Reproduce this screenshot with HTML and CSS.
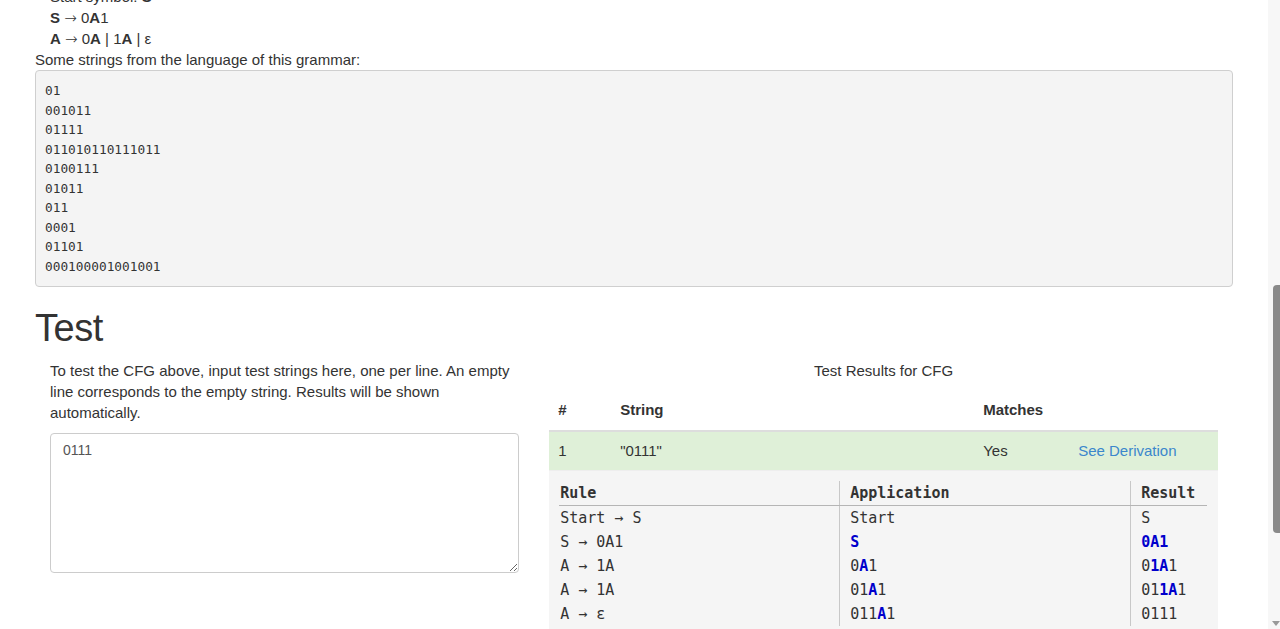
FILE: index.html
```html
<!DOCTYPE html>
<html lang="en">
<head>
<meta charset="utf-8">
<title>CFG Test</title>
<link rel="stylesheet" href="styles.css">
</head>
<body>
<div class="page">
  <main class="content">
    <div class="grammar">
      <div class="gline">Start symbol: <b>S</b></div>
      <div class="gline"><b>S</b> <span class="arr">→</span> 0<b>A</b>1</div>
      <div class="gline"><b>A</b> <span class="arr">→</span> 0<b>A</b> | 1<b>A</b> | ε</div>
    </div>
    <p class="lead-line">Some strings from the language of this grammar:</p>
<pre class="samples">01
001011
01111
011010110111011
0100111
01011
011
0001
01101
000100001001001</pre>
    <h1 class="title">Test</h1>
    <div class="row">
      <div class="col-left">
        <p class="help">To test the CFG above, input test strings here, one per line. An empty line corresponds to the empty string. Results will be shown automatically.</p>
        <textarea class="input">0111</textarea>
      </div>
      <div class="col-right">
        <div class="caption">Test Results for CFG</div>
        <table class="results">
          <thead>
            <tr><th class="c-num">#</th><th class="c-str">String</th><th class="c-match">Matches</th><th class="c-der"></th></tr>
          </thead>
          <tbody>
            <tr class="ok"><td>1</td><td>"0111"</td><td>Yes</td><td><a href="#" class="link">See Derivation</a></td></tr>
            <tr class="deriv-row">
              <td colspan="4" class="deriv-cell">
                <table class="deriv">
                  <thead>
                    <tr><th class="d-rule">Rule</th><th class="d-app">Application</th><th class="d-res">Result</th></tr>
                  </thead>
                  <tbody>
                    <tr><td>Start → S</td><td>Start</td><td>S</td></tr>
                    <tr><td>S → 0A1</td><td><span class="hl">S</span></td><td><span class="hl">0A1</span></td></tr>
                    <tr><td>A → 1A</td><td>0<span class="hl">A</span>1</td><td>0<span class="hl">1A</span>1</td></tr>
                    <tr><td>A → 1A</td><td>01<span class="hl">A</span>1</td><td>01<span class="hl">1A</span>1</td></tr>
                    <tr><td>A → ε</td><td>011<span class="hl">A</span>1</td><td>0111</td></tr>
                  </tbody>
                </table>
              </td>
            </tr>
          </tbody>
        </table>
      </div>
    </div>
  </main>
  <div class="scrollbar">
    <div class="thumb"></div>
    <div class="arrow"></div>
  </div>
</div>
</body>
</html>
```
FILE: styles.css
```css
html, body {
  margin: 0;
  padding: 0;
  height: 629px;
  overflow: hidden;
  background: #fff;
}
body {
  font-family: "Liberation Sans", Arial, sans-serif;
  font-size: 15px;
  line-height: 21.4px;
  color: #333;
}
.page {
  display: flex;
  height: 629px;
  overflow: hidden;
}
.content {
  flex: 1;
  padding: 0 35px 0 35px;
  margin-top: -14px;
}
.grammar {
  padding-left: 15px;
}
.gline {
  line-height: 21px;
  height: 21px;
}
.gline b {
  font-weight: bold;
}
.arr {
  font-family: "DejaVu Sans", sans-serif;
  font-size: 15px;
  font-weight: 300;
  line-height: 0;
}
.lead-line {
  margin: 0;
  line-height: 21px;
}
.samples {
  margin: 0;
  padding: 10px 10px 10px 9px;
  background: #f4f4f4;
  border: 1px solid #cfcfcf;
  border-radius: 4px;
  font-family: "DejaVu Sans Mono", monospace;
  font-size: 12.8px;
  line-height: 19.5px;
  color: #333;
}
.title {
  margin: 20px 0 11px;
  font-family: "Liberation Sans", Arial, sans-serif;
  font-weight: normal;
  font-size: 38px;
  line-height: 42px;
  color: #333;
  letter-spacing: -0.5px;
}
.row {
  display: grid;
  grid-template-columns: 5fr 7fr;
}
.col-left, .col-right {
  padding: 0 15px;
}
.help {
  margin: 0 0 10px;
  line-height: 21px;
}
.input {
  display: block;
  width: 100%;
  box-sizing: border-box;
  height: 140px;
  padding: 6px 12px;
  border: 1px solid #ccc;
  border-radius: 4px;
  font-family: "Liberation Sans", Arial, sans-serif;
  font-size: 14px;
  line-height: 20px;
  color: #555;
  resize: vertical;
}
.caption {
  text-align: center;
  line-height: 21px;
  padding-bottom: 10px;
}
.results {
  width: 100%;
  border-collapse: collapse;
}
.results th {
  text-align: left;
  font-weight: bold;
  padding: 8px 9px 10px;
  line-height: 21px;
  border-bottom: 2px solid #ddd;
}
.results td {
  padding: 8px 9px;
  line-height: 22px;
  border-top: 1px solid #ddd;
  text-align: left;
}
.c-num { width: 44px; }
.c-str { width: 345px; }
.c-match { width: 77px; }
.ok td {
  background: #dff0d8;
  border-top: none;
}
.link {
  color: #3b87cc;
  text-decoration: none;
}
.results td.deriv-cell {
  background: #f5f5f5;
  padding: 10px 11px 10px 10px;
  border-top: 1px solid #eee;
}
.deriv {
  width: 100%;
  border-collapse: collapse;
  font-family: "DejaVu Sans Mono", monospace;
  font-size: 15px;
  color: #333;
}
.deriv th {
  text-align: left;
  font-weight: bold;
  padding: 0 0 0 10px;
  line-height: 24px;
  border-bottom: 1px solid #b5b5b5;
}
.deriv td {
  padding: 0 0 0 10px;
  line-height: 24px;
  border: none;
}
.deriv th:first-child, .deriv td:first-child {
  padding-left: 1px;
}
.deriv th + th, .deriv td + td {
  border-left: 1px solid #c8c8c8;
}
.d-rule { width: 279px; }
.d-app { width: 280px; }
.hl {
  color: #0000cc;
  font-weight: bold;
}
.scrollbar {
  width: 12px;
  background: #f7f7f7;
  display: flex;
  flex-direction: column;
  align-items: flex-end;
}
.thumb {
  margin-top: 285px;
  width: 7px;
  height: 248px;
  background: #8a8a8a;
  border-radius: 4px 0 0 4px;
}
.arrow {
  margin-top: auto;
  margin-bottom: 3px;
  width: 0;
  height: 0;
  border-left: 4px solid transparent;
  border-right: 4px solid transparent;
  border-top: 5px solid #999;
}
```
